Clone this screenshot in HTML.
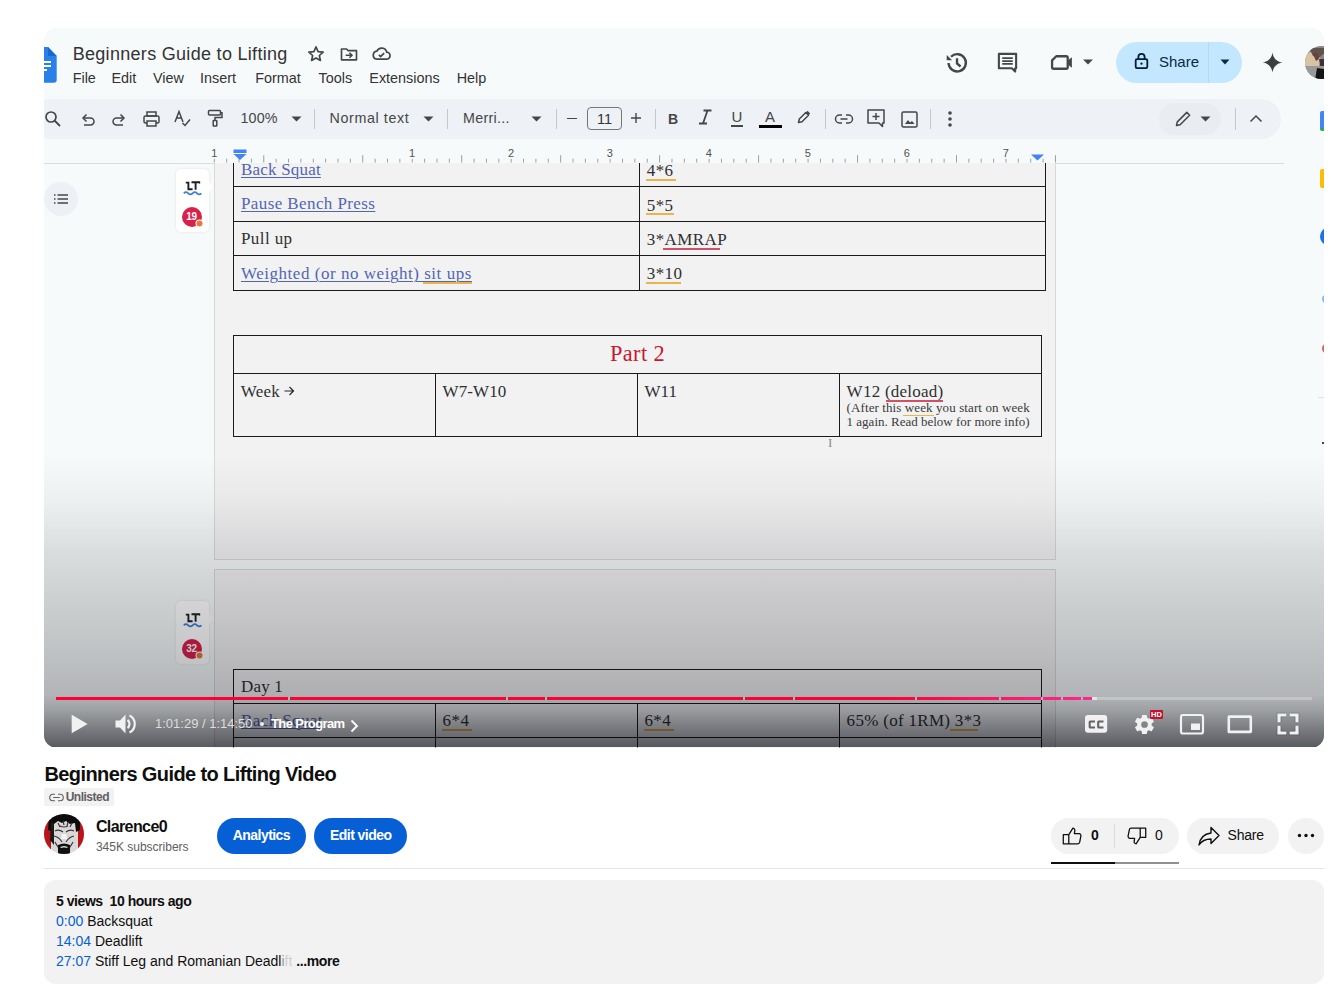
<!DOCTYPE html>
<html><head><meta charset="utf-8">
<style>
*{margin:0;padding:0;box-sizing:border-box}
html,body{width:1341px;height:996px;background:#fff;overflow:hidden;font-family:"Liberation Sans",sans-serif}
.a{position:absolute}
#video{position:absolute;left:0;top:0;width:1341px;height:996px;clip-path:inset(28px 17px 248.5px 44px round 12px);background:#f7fafa}
svg.i{position:absolute;overflow:visible}
.t{position:absolute;white-space:nowrap;line-height:1}
.s{font-family:"Liberation Serif",serif}
.dv{position:absolute;width:1px;background:#c7c7c7}
</style></head><body>
<div id="video">
  <!-- DOCS HEADER -->
  <!-- docs logo -->
  <svg class="i" style="left:40px;top:47px" width="18" height="36" viewBox="0 0 18 36">
    <path d="M0 0 H8 L16.7 9 V33 Q16.7 35.8 13.7 35.8 H0 Z" fill="#2b7fe8"/>
    <path d="M8 0 V9 H16.7 Z" fill="#1967d2"/>
    <rect x="0" y="14" width="11" height="2" fill="#fff"/>
    <rect x="0" y="18" width="11" height="2" fill="#fff"/>
    <rect x="0" y="22" width="7" height="2" fill="#fff"/>
  </svg>
  <div class="t" style="left:72.7px;top:45.4px;font-size:18px;letter-spacing:0.3px;color:#333">Beginners Guide to Lifting</div>
  <div class="t" style="left:72.7px;top:70.5px;font-size:14.4px;color:#333">File</div>
  <div class="t" style="left:111.5px;top:70.5px;font-size:14.4px;color:#333">Edit</div>
  <div class="t" style="left:153px;top:70.5px;font-size:14.4px;color:#333">View</div>
  <div class="t" style="left:200px;top:70.5px;font-size:14.4px;color:#333">Insert</div>
  <div class="t" style="left:255.2px;top:70.5px;font-size:14.4px;color:#333">Format</div>
  <div class="t" style="left:318.5px;top:70.5px;font-size:14.4px;color:#333">Tools</div>
  <div class="t" style="left:369.3px;top:70.5px;font-size:14.4px;color:#333">Extensions</div>
  <div class="t" style="left:456.7px;top:70.5px;font-size:14.4px;color:#333">Help</div>
  <!-- star, folder, cloud -->
  <svg class="i" style="left:306px;top:44px" width="20" height="20" viewBox="0 0 24 24"><path d="M12 3.5l2.5 5.6 6.1.6-4.6 4.1 1.3 6-5.3-3.1-5.3 3.1 1.3-6-4.6-4.1 6.1-.6z" fill="none" stroke="#444746" stroke-width="2" stroke-linejoin="round"/></svg>
  <svg class="i" style="left:339px;top:44px" width="20" height="20" viewBox="0 0 24 24"><path d="M3 6h6l2 2h10v11H3z" fill="none" stroke="#444746" stroke-width="2" stroke-linejoin="round"/><path d="M8 13.5h7M12.5 10.5l3 3-3 3" fill="none" stroke="#444746" stroke-width="2"/></svg>
  <svg class="i" style="left:371px;top:43px" width="21" height="21" viewBox="0 0 24 24"><path d="M6.5 18.5h11a4 4 0 0 0 .5-8 6 6 0 0 0-11.3-1.3A4.7 4.7 0 0 0 6.5 18.5z" fill="none" stroke="#444746" stroke-width="2"/><path d="M9 13.5l2 2 4-4" fill="none" stroke="#444746" stroke-width="2"/></svg>
  <!-- right header icons -->
  <svg class="i" style="left:943.5px;top:49.5px" width="26" height="26" viewBox="0 0 24 24"><path d="M4.2 12A8 8 0 1 0 6.5 6.2" fill="none" stroke="#444746" stroke-width="2.2"/><path d="M2.5 4.5v5h5z" fill="#444746"/><path d="M12 7.5v5l3.3 2.7" fill="none" stroke="#444746" stroke-width="2.2"/></svg>
  <svg class="i" style="left:996px;top:51px" width="23" height="23" viewBox="0 0 24 24"><path d="M3 3h18v15h-1v3.5L16.5 18H3z" fill="none" stroke="#444746" stroke-width="2.2" stroke-linejoin="round"/><path d="M6.5 7.5h11M6.5 10.5h11M6.5 13.5h11" stroke="#444746" stroke-width="1.8"/></svg>
  <svg class="i" style="left:1050px;top:49.5px" width="25" height="25" viewBox="0 0 24 24"><path d="M6 6h9.5a1.5 1.5 0 0 1 1.5 1.5V16.5a1.5 1.5 0 0 1-1.5 1.5H3.5A1.5 1.5 0 0 1 2 16.5V10z" fill="none" stroke="#444746" stroke-width="2.2" stroke-linejoin="round"/><path d="M17 10l4-3v10l-4-3z" fill="#444746"/></svg>
  <svg class="i" style="left:1082px;top:58px" width="12" height="8" viewBox="0 0 12 8"><path d="M1 1.5h10L6 6.5z" fill="#444746"/></svg>
  <div class="a" style="left:1116px;top:42px;width:126px;height:41px;border-radius:20.5px;background:#c2e7ff"></div>
  <div class="a" style="left:1208px;top:42px;width:1px;height:41px;background:#b0daf7"></div>
  <svg class="i" style="left:1132.5px;top:52px" width="17" height="18" viewBox="0 0 19 20"><rect x="3" y="8" width="13" height="10" rx="1.5" fill="none" stroke="#001d35" stroke-width="2"/><path d="M6 8V5.5a3.5 3.5 0 0 1 7 0V8" fill="none" stroke="#001d35" stroke-width="2"/><circle cx="9.5" cy="13" r="1.3" fill="#001d35"/></svg>
  <div class="t" style="left:1159px;top:54px;font-size:15px;color:#0b2a44">Share</div>
  <svg class="i" style="left:1220px;top:59px" width="10" height="6" viewBox="0 0 10 6"><path d="M0.5 0.5h9L5 5.5z" fill="#0b2a44"/></svg>
  <svg class="i" style="left:1260.5px;top:50.5px" width="23" height="23" viewBox="0 0 24 24"><path d="M12 1.5C12.8 7.5 16.5 11.2 22.5 12C16.5 12.8 12.8 16.5 12 22.5C11.2 16.5 7.5 12.8 1.5 12C7.5 11.2 11.2 7.5 12 1.5z" fill="#3c3f3e"/></svg>
  <svg class="i" style="left:1304.5px;top:45.5px" width="34" height="34" viewBox="0 0 34 34"><defs><clipPath id="hav"><circle cx="16.5" cy="16.5" r="16.5"/></clipPath></defs><g clip-path="url(#hav)"><rect width="34" height="34" fill="#8c8580"/><path d="M0 10Q5 4 12 6L16 14 14 20H0z" fill="#d8c3a4"/><path d="M4 2h30v14l-6-2-4-6-6 0-4 4-6-2z" fill="#5d544f"/><path d="M8 8q2-3 5 0l1 5-3 2z" fill="#6b4236"/><path d="M14 13l6 0 3 10-7 2z" fill="#3a3040"/><path d="M0 20h34v14H0z" fill="#9a9a9a"/><path d="M12 22l8 1 6 11H10z" fill="#151515"/><path d="M24 23l4 0 2 6-4 1z" fill="#d0d0d0"/></g></svg>

  <!-- TOOLBAR -->
  <div class="a" style="left:30px;top:99px;width:1251px;height:40px;border-radius:20px;background:#eef1f6"></div>
  <svg class="i" style="left:44px;top:110px" width="18" height="18" viewBox="0 0 18 18"><circle cx="7" cy="7" r="5" fill="none" stroke="#444746" stroke-width="1.7"/><path d="M10.5 10.5l5.5 5.5" stroke="#444746" stroke-width="1.8"/></svg>
  <svg class="i" style="left:79px;top:110px" width="18" height="18" viewBox="0 0 18 18"><path d="M5 8h6.5a3.5 3.5 0 0 1 0 7H5" fill="none" stroke="#444746" stroke-width="1.5"/><path d="M7.5 4.5L4 8l3.5 3.5" fill="none" stroke="#444746" stroke-width="1.5"/></svg>
  <svg class="i" style="left:110px;top:110px" width="18" height="18" viewBox="0 0 18 18"><path d="M13 8H6.5a3.5 3.5 0 0 0 0 7H13" fill="none" stroke="#444746" stroke-width="1.5"/><path d="M10.5 4.5L14 8l-3.5 3.5" fill="none" stroke="#444746" stroke-width="1.5"/></svg>
  <svg class="i" style="left:142px;top:110px" width="19" height="18" viewBox="0 0 19 18"><rect x="5" y="2" width="9" height="4" fill="none" stroke="#444746" stroke-width="1.5"/><rect x="2" y="6" width="15" height="7" rx="1.5" fill="none" stroke="#444746" stroke-width="1.5"/><rect x="5" y="11" width="9" height="5" fill="#eef1f6" stroke="#444746" stroke-width="1.5"/></svg>
  <svg class="i" style="left:173px;top:109px" width="19" height="19" viewBox="0 0 19 19"><path d="M2 13L6 2.5 10 13M3.5 9h5" fill="none" stroke="#444746" stroke-width="1.5"/><path d="M9.5 14l2.5 2.5 5-6" fill="none" stroke="#444746" stroke-width="1.5"/></svg>
  <svg class="i" style="left:206px;top:108px" width="18" height="21" viewBox="0 0 18 21"><rect x="2.5" y="2.5" width="12" height="4.5" rx="1" fill="none" stroke="#444746" stroke-width="1.5"/><path d="M14.5 4.7h1.5v4.8H9v3" fill="none" stroke="#444746" stroke-width="1.5"/><rect x="7.2" y="12.5" width="3.6" height="5.5" rx="0.6" fill="none" stroke="#444746" stroke-width="1.5"/></svg>
  <div class="t" style="left:240.4px;top:111.3px;font-size:14.3px;letter-spacing:0.2px;color:#444746">100%</div>
  <svg class="i" style="left:291px;top:116px" width="11" height="6" viewBox="0 0 11 6"><path d="M0.5 0.5h10L5.5 5.5z" fill="#444746"/></svg>
  <div class="dv" style="left:314px;top:109px;height:20px"></div>
  <div class="t" style="left:329.6px;top:111.3px;font-size:14.3px;letter-spacing:0.6px;color:#444746">Normal text</div>
  <svg class="i" style="left:423px;top:116px" width="11" height="6" viewBox="0 0 11 6"><path d="M0.5 0.5h10L5.5 5.5z" fill="#444746"/></svg>
  <div class="dv" style="left:447px;top:109px;height:20px"></div>
  <div class="t" style="left:463px;top:111.3px;font-size:14.3px;letter-spacing:0.3px;color:#444746">Merri...</div>
  <svg class="i" style="left:531px;top:116px" width="11" height="6" viewBox="0 0 11 6"><path d="M0.5 0.5h10L5.5 5.5z" fill="#444746"/></svg>
  <div class="dv" style="left:556px;top:109px;height:20px"></div>
  <div class="a" style="left:566.5px;top:118px;width:10px;height:1.4px;background:#444746"></div>
  <div class="a" style="left:587px;top:107px;width:35px;height:23px;border:1px solid #747775;border-radius:4px"></div>
  <div class="t" style="left:587px;width:35px;text-align:center;top:111.5px;font-size:14.5px;color:#333">11</div>
  <svg class="i" style="left:630px;top:112px" width="12" height="12" viewBox="0 0 12 12"><path d="M6 1v10M1 6h10" stroke="#444746" stroke-width="1.4"/></svg>
  <div class="dv" style="left:655px;top:109px;height:20px"></div>
  <div class="t" style="left:668px;top:111.5px;font-size:14px;font-weight:bold;color:#444746">B</div>
  <svg class="i" style="left:697px;top:108px" width="16" height="18" viewBox="0 0 16 18"><path d="M6.5 2.5h8M2 15.5h8M10.5 2.5l-4.5 13" fill="none" stroke="#444746" stroke-width="1.8"/></svg>
  <div class="t" style="left:731.5px;top:108.5px;font-size:15px;color:#444746">U</div><div class="a" style="left:731px;top:125px;width:12px;height:1.6px;background:#444746"></div>
  <div class="t" style="left:765px;top:108.5px;font-size:15px;color:#444746">A</div>
  <div class="a" style="left:759.4px;top:124.5px;width:23px;height:3.5px;background:#000"></div>
  <svg class="i" style="left:795px;top:108px" width="18" height="18" viewBox="0 0 18 18"><path d="M3.5 14.5l.8-3.5 6.5-6.5 2.7 2.7-6.5 6.5z" fill="none" stroke="#444746" stroke-width="1.5" stroke-linejoin="round"/><path d="M10.8 4.5l1.7-1.7 2.7 2.7-1.7 1.7z" fill="#444746"/></svg>
  <div class="dv" style="left:825px;top:109px;height:20px"></div>
  <svg class="i" style="left:834px;top:110px" width="20" height="18" viewBox="0 0 20 18"><path d="M8 5H5.5a4 4 0 0 0 0 8H8M12 5h2.5a4 4 0 0 1 0 8H12M6.5 9h7" fill="none" stroke="#444746" stroke-width="1.5"/></svg>
  <svg class="i" style="left:866px;top:108px" width="20" height="21" viewBox="0 0 20 21"><path d="M2 2h16v13h-1.5v3.5L13 15H2z" fill="none" stroke="#444746" stroke-width="1.5" stroke-linejoin="round"/><path d="M10 5v7M6.5 8.5h7" stroke="#444746" stroke-width="1.5"/></svg>
  <svg class="i" style="left:900px;top:110px" width="19" height="19" viewBox="0 0 19 19"><rect x="2" y="2" width="15" height="15" rx="1.5" fill="none" stroke="#444746" stroke-width="1.5"/><path d="M5 14l3-4 2 2.5 2-1.5 2.5 3z" fill="#444746"/></svg>
  <div class="dv" style="left:930px;top:109px;height:20px"></div>
  <svg class="i" style="left:947px;top:110px" width="6" height="18" viewBox="0 0 6 18"><circle cx="3" cy="3" r="1.8" fill="#444746"/><circle cx="3" cy="9" r="1.8" fill="#444746"/><circle cx="3" cy="15" r="1.8" fill="#444746"/></svg>
  <div class="a" style="left:1159px;top:103px;width:62px;height:32px;border-radius:16px;background:#e9ecf1"></div>
  <svg class="i" style="left:1174px;top:110px" width="18" height="18" viewBox="0 0 18 18"><path d="M2.5 15.5l.8-3.6 9.5-9.5 2.8 2.8-9.5 9.5z" fill="none" stroke="#444746" stroke-width="1.5" stroke-linejoin="round"/></svg>
  <svg class="i" style="left:1200px;top:116px" width="11" height="6" viewBox="0 0 11 6"><path d="M0.5 0.5h10L5.5 5.5z" fill="#444746"/></svg>
  <div class="dv" style="left:1235px;top:108px;height:22px"></div>
  <svg class="i" style="left:1249px;top:114px" width="14" height="9" viewBox="0 0 14 9"><path d="M1.5 7.5L7 2l5.5 5.5" fill="none" stroke="#444746" stroke-width="1.5"/></svg>

  <!-- RIGHT SIDE APPS -->
  <div class="a" style="left:1320px;top:111px;width:8px;height:20px;border-radius:2px;background:#4285f4;border-bottom:3px solid #34a853"></div>
  <div class="a" style="left:1320px;top:169px;width:8px;height:19px;border-radius:2px;background:#fbbc04"></div>
  <div class="a" style="left:1320px;top:228px;width:16px;height:17px;border-radius:50%;background:#1a73e8"></div>
  <div class="a" style="left:1322px;top:295px;width:8px;height:8px;border-radius:50%;background:#8ab4f8"></div>
  <div class="a" style="left:1322px;top:344px;width:8px;height:9px;border-radius:50%;background:#c5221f;opacity:.7"></div>
  <div class="a" style="left:1318px;top:397px;width:10px;height:1px;background:#e3e3e3"></div>
  <div class="a" style="left:1322px;top:442px;width:3px;height:2px;background:#444"></div>

  <!-- RULER -->
  <div class="a" style="left:44px;top:162.5px;width:1240px;height:1px;background:#dadce0"></div>
<svg class="i" style="left:0;top:0" width="1341" height="170"><line x1="214.30" y1="158.8" x2="214.30" y2="162.5" stroke="#9c9fa3" stroke-width="1"/><line x1="226.67" y1="158.8" x2="226.67" y2="162.5" stroke="#9c9fa3" stroke-width="1"/><line x1="239.04" y1="158.8" x2="239.04" y2="162.5" stroke="#9c9fa3" stroke-width="1"/><line x1="251.41" y1="158.8" x2="251.41" y2="162.5" stroke="#9c9fa3" stroke-width="1"/><line x1="263.78" y1="155.2" x2="263.78" y2="162.5" stroke="#9c9fa3" stroke-width="1"/><line x1="276.15" y1="158.8" x2="276.15" y2="162.5" stroke="#9c9fa3" stroke-width="1"/><line x1="288.52" y1="158.8" x2="288.52" y2="162.5" stroke="#9c9fa3" stroke-width="1"/><line x1="300.89" y1="158.8" x2="300.89" y2="162.5" stroke="#9c9fa3" stroke-width="1"/><line x1="313.26" y1="158.8" x2="313.26" y2="162.5" stroke="#9c9fa3" stroke-width="1"/><line x1="325.63" y1="158.8" x2="325.63" y2="162.5" stroke="#9c9fa3" stroke-width="1"/><line x1="338.00" y1="158.8" x2="338.00" y2="162.5" stroke="#9c9fa3" stroke-width="1"/><line x1="350.37" y1="158.8" x2="350.37" y2="162.5" stroke="#9c9fa3" stroke-width="1"/><line x1="362.74" y1="155.2" x2="362.74" y2="162.5" stroke="#9c9fa3" stroke-width="1"/><line x1="375.11" y1="158.8" x2="375.11" y2="162.5" stroke="#9c9fa3" stroke-width="1"/><line x1="387.48" y1="158.8" x2="387.48" y2="162.5" stroke="#9c9fa3" stroke-width="1"/><line x1="399.85" y1="158.8" x2="399.85" y2="162.5" stroke="#9c9fa3" stroke-width="1"/><line x1="412.22" y1="158.8" x2="412.22" y2="162.5" stroke="#9c9fa3" stroke-width="1"/><line x1="424.59" y1="158.8" x2="424.59" y2="162.5" stroke="#9c9fa3" stroke-width="1"/><line x1="436.96" y1="158.8" x2="436.96" y2="162.5" stroke="#9c9fa3" stroke-width="1"/><line x1="449.33" y1="158.8" x2="449.33" y2="162.5" stroke="#9c9fa3" stroke-width="1"/><line x1="461.70" y1="155.2" x2="461.70" y2="162.5" stroke="#9c9fa3" stroke-width="1"/><line x1="474.07" y1="158.8" x2="474.07" y2="162.5" stroke="#9c9fa3" stroke-width="1"/><line x1="486.44" y1="158.8" x2="486.44" y2="162.5" stroke="#9c9fa3" stroke-width="1"/><line x1="498.81" y1="158.8" x2="498.81" y2="162.5" stroke="#9c9fa3" stroke-width="1"/><line x1="511.18" y1="158.8" x2="511.18" y2="162.5" stroke="#9c9fa3" stroke-width="1"/><line x1="523.55" y1="158.8" x2="523.55" y2="162.5" stroke="#9c9fa3" stroke-width="1"/><line x1="535.92" y1="158.8" x2="535.92" y2="162.5" stroke="#9c9fa3" stroke-width="1"/><line x1="548.29" y1="158.8" x2="548.29" y2="162.5" stroke="#9c9fa3" stroke-width="1"/><line x1="560.66" y1="155.2" x2="560.66" y2="162.5" stroke="#9c9fa3" stroke-width="1"/><line x1="573.03" y1="158.8" x2="573.03" y2="162.5" stroke="#9c9fa3" stroke-width="1"/><line x1="585.40" y1="158.8" x2="585.40" y2="162.5" stroke="#9c9fa3" stroke-width="1"/><line x1="597.77" y1="158.8" x2="597.77" y2="162.5" stroke="#9c9fa3" stroke-width="1"/><line x1="610.14" y1="158.8" x2="610.14" y2="162.5" stroke="#9c9fa3" stroke-width="1"/><line x1="622.51" y1="158.8" x2="622.51" y2="162.5" stroke="#9c9fa3" stroke-width="1"/><line x1="634.88" y1="158.8" x2="634.88" y2="162.5" stroke="#9c9fa3" stroke-width="1"/><line x1="647.25" y1="158.8" x2="647.25" y2="162.5" stroke="#9c9fa3" stroke-width="1"/><line x1="659.62" y1="155.2" x2="659.62" y2="162.5" stroke="#9c9fa3" stroke-width="1"/><line x1="671.99" y1="158.8" x2="671.99" y2="162.5" stroke="#9c9fa3" stroke-width="1"/><line x1="684.36" y1="158.8" x2="684.36" y2="162.5" stroke="#9c9fa3" stroke-width="1"/><line x1="696.73" y1="158.8" x2="696.73" y2="162.5" stroke="#9c9fa3" stroke-width="1"/><line x1="709.10" y1="158.8" x2="709.10" y2="162.5" stroke="#9c9fa3" stroke-width="1"/><line x1="721.47" y1="158.8" x2="721.47" y2="162.5" stroke="#9c9fa3" stroke-width="1"/><line x1="733.84" y1="158.8" x2="733.84" y2="162.5" stroke="#9c9fa3" stroke-width="1"/><line x1="746.21" y1="158.8" x2="746.21" y2="162.5" stroke="#9c9fa3" stroke-width="1"/><line x1="758.58" y1="155.2" x2="758.58" y2="162.5" stroke="#9c9fa3" stroke-width="1"/><line x1="770.95" y1="158.8" x2="770.95" y2="162.5" stroke="#9c9fa3" stroke-width="1"/><line x1="783.32" y1="158.8" x2="783.32" y2="162.5" stroke="#9c9fa3" stroke-width="1"/><line x1="795.69" y1="158.8" x2="795.69" y2="162.5" stroke="#9c9fa3" stroke-width="1"/><line x1="808.06" y1="158.8" x2="808.06" y2="162.5" stroke="#9c9fa3" stroke-width="1"/><line x1="820.43" y1="158.8" x2="820.43" y2="162.5" stroke="#9c9fa3" stroke-width="1"/><line x1="832.80" y1="158.8" x2="832.80" y2="162.5" stroke="#9c9fa3" stroke-width="1"/><line x1="845.17" y1="158.8" x2="845.17" y2="162.5" stroke="#9c9fa3" stroke-width="1"/><line x1="857.54" y1="155.2" x2="857.54" y2="162.5" stroke="#9c9fa3" stroke-width="1"/><line x1="869.91" y1="158.8" x2="869.91" y2="162.5" stroke="#9c9fa3" stroke-width="1"/><line x1="882.28" y1="158.8" x2="882.28" y2="162.5" stroke="#9c9fa3" stroke-width="1"/><line x1="894.65" y1="158.8" x2="894.65" y2="162.5" stroke="#9c9fa3" stroke-width="1"/><line x1="907.02" y1="158.8" x2="907.02" y2="162.5" stroke="#9c9fa3" stroke-width="1"/><line x1="919.39" y1="158.8" x2="919.39" y2="162.5" stroke="#9c9fa3" stroke-width="1"/><line x1="931.76" y1="158.8" x2="931.76" y2="162.5" stroke="#9c9fa3" stroke-width="1"/><line x1="944.13" y1="158.8" x2="944.13" y2="162.5" stroke="#9c9fa3" stroke-width="1"/><line x1="956.50" y1="155.2" x2="956.50" y2="162.5" stroke="#9c9fa3" stroke-width="1"/><line x1="968.87" y1="158.8" x2="968.87" y2="162.5" stroke="#9c9fa3" stroke-width="1"/><line x1="981.24" y1="158.8" x2="981.24" y2="162.5" stroke="#9c9fa3" stroke-width="1"/><line x1="993.61" y1="158.8" x2="993.61" y2="162.5" stroke="#9c9fa3" stroke-width="1"/><line x1="1005.98" y1="158.8" x2="1005.98" y2="162.5" stroke="#9c9fa3" stroke-width="1"/><line x1="1018.35" y1="158.8" x2="1018.35" y2="162.5" stroke="#9c9fa3" stroke-width="1"/><line x1="1030.72" y1="158.8" x2="1030.72" y2="162.5" stroke="#9c9fa3" stroke-width="1"/><line x1="1043.09" y1="158.8" x2="1043.09" y2="162.5" stroke="#9c9fa3" stroke-width="1"/><line x1="1055.46" y1="155.2" x2="1055.46" y2="162.5" stroke="#9c9fa3" stroke-width="1"/></svg>
<div class="t" style="left:204.3px;width:20px;text-align:center;top:147.6px;font-size:11px;color:#505352">1</div>
<div class="t" style="left:402.0px;width:20px;text-align:center;top:147.6px;font-size:11px;color:#505352">1</div>
<div class="t" style="left:501.0px;width:20px;text-align:center;top:147.6px;font-size:11px;color:#505352">2</div>
<div class="t" style="left:599.9px;width:20px;text-align:center;top:147.6px;font-size:11px;color:#505352">3</div>
<div class="t" style="left:698.8px;width:20px;text-align:center;top:147.6px;font-size:11px;color:#505352">4</div>
<div class="t" style="left:797.8px;width:20px;text-align:center;top:147.6px;font-size:11px;color:#505352">5</div>
<div class="t" style="left:896.7px;width:20px;text-align:center;top:147.6px;font-size:11px;color:#505352">6</div>
<div class="t" style="left:995.7px;width:20px;text-align:center;top:147.6px;font-size:11px;color:#505352">7</div>
<svg class="i" style="left:233px;top:149px" width="14" height="12" viewBox="0 0 14 12"><rect x="0.5" y="0.5" width="13" height="3.5" fill="#4285f4"/><path d="M0.5 5h13L7 11z" fill="#4285f4"/></svg>
<svg class="i" style="left:1031px;top:154px" width="13" height="7" viewBox="0 0 13 7"><path d="M0 0.5h13L6.5 6.5z" fill="#4285f4"/></svg>

  <!-- PAGES -->
  <div class="a" style="left:214px;top:163px;width:842px;height:396.5px;background:#f2f2f3;border:1px solid #d8d8d8;border-top:none"></div>
<div class="a" style="left:214px;top:569px;width:842px;height:200px;background:#f2f2f3;border:1px solid #d8d8d8"></div>
<div class="a" style="left:233.4px;top:186px;width:813px;height:1.2px;background:#1b1b1b"></div>
<div class="a" style="left:233.4px;top:220.7px;width:813px;height:1.2px;background:#1b1b1b"></div>
<div class="a" style="left:233.4px;top:255.2px;width:813px;height:1.2px;background:#1b1b1b"></div>
<div class="a" style="left:233.4px;top:289.6px;width:813px;height:1.2px;background:#1b1b1b"></div>
<div class="a" style="left:233px;top:163px;width:1.2px;height:128px;background:#1b1b1b"></div>
<div class="a" style="left:639px;top:163px;width:1.2px;height:128px;background:#1b1b1b"></div>
<div class="a" style="left:1045px;top:163px;width:1.2px;height:128px;background:#1b1b1b"></div>
<div class="t s" style="left:241px;top:160.8px;font-size:17px;letter-spacing:0.2px;color:#5266b3;text-decoration:underline;text-decoration-color:#5266b3;text-decoration-thickness:1px;text-underline-offset:2px">Back Squat</div>
<div class="t s" style="left:241px;top:195.3px;font-size:17px;letter-spacing:0.4px;color:#5266b3;text-decoration:underline;text-decoration-color:#5266b3;text-decoration-thickness:1px;text-underline-offset:2px">Pause Bench Press</div>
<div class="t s" style="left:241px;top:229.8px;font-size:17px;letter-spacing:0.4px;color:#303030;">Pull up</div>
<div class="t s" style="left:241px;top:265.0px;font-size:17px;letter-spacing:0.53px;color:#5266b3;text-decoration:underline;text-decoration-color:#5266b3;text-decoration-thickness:1px;text-underline-offset:2px">Weighted (or no weight) sit ups</div>
<div class="t s" style="left:646.8px;top:162.0px;font-size:17px;letter-spacing:0.4px;color:#303030;">4*6</div>
<div class="a" style="left:646px;top:178.5px;width:30px;height:2px;background:#e9b44c"></div>
<div class="t s" style="left:646.8px;top:196.8px;font-size:17px;letter-spacing:0.4px;color:#303030;">5*5</div>
<div class="a" style="left:646px;top:212.5px;width:28px;height:2px;background:#e9b44c"></div>
<div class="t s" style="left:646.8px;top:231.3px;font-size:17px;letter-spacing:0.4px;color:#303030;">3*AMRAP</div>
<div class="a" style="left:663px;top:247.5px;width:57px;height:2px;background:#d0506a"></div>
<div class="t s" style="left:646.8px;top:265.3px;font-size:17px;letter-spacing:0.4px;color:#303030;">3*10</div>
<div class="a" style="left:646px;top:281.5px;width:35px;height:2px;background:#e9b44c"></div>
<div class="a" style="left:423px;top:281.5px;width:49px;height:2px;background:#e9b44c"></div>
<div class="a" style="left:233.4px;top:335px;width:808.5px;height:1.2px;background:#1b1b1b"></div>
<div class="a" style="left:233.4px;top:373.3px;width:808.5px;height:1.2px;background:#1b1b1b"></div>
<div class="a" style="left:233.4px;top:435.8px;width:808.5px;height:1.2px;background:#1b1b1b"></div>
<div class="a" style="left:233px;top:335px;width:1.2px;height:102px;background:#1b1b1b"></div>
<div class="a" style="left:1041px;top:335px;width:1.2px;height:102px;background:#1b1b1b"></div>
<div class="a" style="left:435px;top:373.3px;width:1.2px;height:63.5px;background:#1b1b1b"></div>
<div class="a" style="left:637px;top:373.3px;width:1.2px;height:63.5px;background:#1b1b1b"></div>
<div class="a" style="left:839px;top:373.3px;width:1.2px;height:63.5px;background:#1b1b1b"></div>
<div class="t s" style="left:610px;top:343.2px;font-size:22.4px;letter-spacing:0.35px;color:#c8182f;">Part 2</div>
<div class="t s" style="left:240.8px;top:383.0px;font-size:17px;letter-spacing:0.2px;color:#303030;">Week</div>
<svg class="i" style="left:284px;top:386px" width="11" height="10" viewBox="0 0 11 10"><path d="M0.5 5h9M5.5 1l4 4-4 4" fill="none" stroke="#262626" stroke-width="1.2"/></svg>
<div class="t s" style="left:442.6px;top:383.0px;font-size:17px;letter-spacing:0.1px;color:#303030;">W7-W10</div>
<div class="t s" style="left:644.4px;top:383.0px;font-size:17px;letter-spacing:0.1px;color:#303030;">W11</div>
<div class="t s" style="left:846.6px;top:382.8px;font-size:17px;letter-spacing:0.25px;color:#303030;">W12 (deload)</div>
<div class="a" style="left:886px;top:400px;width:57px;height:1.5px;background:#d0506a"></div>
<div class="t s" style="left:846.6px;top:401.4px;font-size:13px;letter-spacing:0.1px;color:#3a3a3a;">(After this week you start on week</div>
<div class="a" style="left:903px;top:414.5px;width:31px;height:1.5px;background:#e9b44c"></div>
<div class="t s" style="left:846.6px;top:415.4px;font-size:13px;letter-spacing:0px;color:#3a3a3a;">1 again. Read below for more info)</div>
<div class="t s" style="left:828px;top:436px;font-size:13px;color:#8a8a8a">I</div>
<div class="a" style="left:233.4px;top:668.5px;width:808.5px;height:1.2px;background:#1b1b1b"></div>
<div class="a" style="left:233.4px;top:703px;width:808.5px;height:1.2px;background:#1b1b1b"></div>
<div class="a" style="left:233.4px;top:737.3px;width:808.5px;height:1.2px;background:#1b1b1b"></div>
<div class="a" style="left:233px;top:668.5px;width:1.2px;height:90px;background:#1b1b1b"></div>
<div class="a" style="left:1041px;top:668.5px;width:1.2px;height:90px;background:#1b1b1b"></div>
<div class="a" style="left:435px;top:703px;width:1.2px;height:50px;background:#1b1b1b"></div>
<div class="a" style="left:637px;top:703px;width:1.2px;height:50px;background:#1b1b1b"></div>
<div class="a" style="left:839px;top:703px;width:1.2px;height:50px;background:#1b1b1b"></div>
<div class="t s" style="left:241px;top:677.6px;font-size:17px;letter-spacing:0.2px;color:#303030;">Day 1</div>
<div class="t s" style="left:241px;top:711.8px;font-size:17px;letter-spacing:0.4px;color:#5266b3;text-decoration:underline;text-decoration-color:#5266b3;text-decoration-thickness:1px;text-underline-offset:2px">Back Squat</div>
<div class="t s" style="left:442.6px;top:712.3px;font-size:17px;letter-spacing:0.4px;color:#303030;">6*4</div>
<div class="a" style="left:442px;top:728.5px;width:30px;height:2px;background:#e9b44c"></div>
<div class="t s" style="left:644.4px;top:712.3px;font-size:17px;letter-spacing:0.4px;color:#303030;">6*4</div>
<div class="a" style="left:644px;top:728.5px;width:30px;height:2px;background:#e9b44c"></div>
<div class="t s" style="left:846.6px;top:712.3px;font-size:17px;letter-spacing:0.3px;color:#303030;">65% (of 1RM) 3*3</div>
<div class="a" style="left:950px;top:728.5px;width:28px;height:2px;background:#e9b44c"></div>
<div class="a" style="left:176px;top:169px;width:33px;height:63px;border-radius:5px;background:#fff;box-shadow:0 0 3px rgba(0,0,0,.10)"></div>
<svg class="i" style="left:209px;top:182px" width="5" height="10" viewBox="0 0 5 10"><path d="M0 0l4.5 5L0 10z" fill="#fff" opacity=".85"/></svg>
<svg class="i" style="left:176px;top:169px" width="33" height="63" viewBox="0 0 33 63"><path d="M9.8 13.6h2.6v6.6h4.2" fill="none" stroke="#1f1f1f" stroke-width="1.9"/><path d="M15.5 13.2h8.2M19.6 13.2v7.6" fill="none" stroke="#1f1f1f" stroke-width="1.9"/><path d="M23.5 12.4v2.2" stroke="#1f1f1f" stroke-width="1.4"/><path d="M7.8 24.3q2.2-2.2 4.4 0t4.4 0 4.4 0 4.4 0" fill="none" stroke="#3d7fd6" stroke-width="1.7"/><circle cx="16" cy="48" r="10" fill="#d9204b"/><circle cx="23.5" cy="54.5" r="4" fill="#fff"/><circle cx="23.5" cy="54.5" r="3" fill="#e8793a"/></svg>
<div class="t" style="left:181.5px;width:20px;text-align:center;top:212px;font-size:10px;font-weight:bold;letter-spacing:-0.3px;color:#fff">19</div>
<div class="a" style="left:176px;top:601px;width:33px;height:63px;border-radius:5px;background:#fff;box-shadow:0 0 3px rgba(0,0,0,.10)"></div>
<svg class="i" style="left:209px;top:614px" width="5" height="10" viewBox="0 0 5 10"><path d="M0 0l4.5 5L0 10z" fill="#fff" opacity=".85"/></svg>
<svg class="i" style="left:176px;top:601px" width="33" height="63" viewBox="0 0 33 63"><path d="M9.8 13.6h2.6v6.6h4.2" fill="none" stroke="#1f1f1f" stroke-width="1.9"/><path d="M15.5 13.2h8.2M19.6 13.2v7.6" fill="none" stroke="#1f1f1f" stroke-width="1.9"/><path d="M23.5 12.4v2.2" stroke="#1f1f1f" stroke-width="1.4"/><path d="M7.8 24.3q2.2-2.2 4.4 0t4.4 0 4.4 0 4.4 0" fill="none" stroke="#3d7fd6" stroke-width="1.7"/><circle cx="16" cy="48" r="10" fill="#d9204b"/><circle cx="23.5" cy="54.5" r="4" fill="#fff"/><circle cx="23.5" cy="54.5" r="3" fill="#e8793a"/></svg>
<div class="t" style="left:181.5px;width:20px;text-align:center;top:644px;font-size:10px;font-weight:bold;letter-spacing:-0.3px;color:#fff">32</div>
<div class="a" style="left:44px;top:182px;width:34px;height:34px;border-radius:50%;background:#edf0f4"></div>
<svg class="i" style="left:53px;top:193px" width="16" height="12" viewBox="0 0 16 12"><path d="M1 2h1.5M1 6h1.5M1 10h1.5M4.5 2H15M4.5 6H15M4.5 10H15" stroke="#444746" stroke-width="1.6"/></svg>

  <!-- OVERLAY -->
  <div class="a" style="left:44px;top:455px;width:1280px;height:292px;background:linear-gradient(to bottom,rgba(0,2,10,0) 0%,rgba(0,2,10,.04) 15.4%,rgba(0,2,10,.115) 32.5%,rgba(0,2,10,.16) 46.2%,rgba(0,2,10,.21) 63.4%,rgba(0,2,10,.28) 82.2%,rgba(0,2,10,.36) 87.3%,rgba(0,2,10,.5) 93.5%,rgba(0,2,10,.64) 100%)"></div>
<div class="a" style="left:56px;top:697px;width:1256px;height:3px;background:rgba(255,255,255,.25)"></div>
<div class="a" style="left:1091.6px;top:697px;width:5px;height:3px;background:rgba(255,255,255,.55)"></div>
<div class="a" style="left:56px;top:697px;width:1035.6px;height:3px;background:linear-gradient(to right,#f03 80%,#ff2791 100%)"></div>
<div class="a" style="left:288.0px;top:697px;width:2px;height:3px;background:#b4b6b8"></div>
<div class="a" style="left:506.1px;top:697px;width:2px;height:3px;background:#b4b6b8"></div>
<div class="a" style="left:544.8px;top:697px;width:2px;height:3px;background:#b4b6b8"></div>
<div class="a" style="left:742.9px;top:697px;width:2px;height:3px;background:#b4b6b8"></div>
<div class="a" style="left:792.8px;top:697px;width:2px;height:3px;background:#b4b6b8"></div>
<div class="a" style="left:914.7px;top:697px;width:2px;height:3px;background:#b4b6b8"></div>
<div class="a" style="left:998.6px;top:697px;width:2px;height:3px;background:#b4b6b8"></div>
<div class="a" style="left:1040.9px;top:697px;width:2px;height:3px;background:#b4b6b8"></div>
<div class="a" style="left:1061.0px;top:697px;width:2px;height:3px;background:#b4b6b8"></div>
<div class="a" style="left:1081.0px;top:697px;width:2px;height:3px;background:#b4b6b8"></div>
<svg class="i" style="left:71px;top:714px" width="18" height="20" viewBox="0 0 18 20"><path d="M0.7 0.8L16.6 10 0.7 19.3z" fill="#f1f1f1"/></svg>
<svg class="i" style="left:115px;top:714px" width="20" height="20" viewBox="0 0 20 20"><path d="M0.5 6.5h4.5L10.5 0.5v19L5 13.5H0.5z" fill="#f1f1f1"/><path d="M12.5 6a5 5 0 0 1 0 8" fill="none" stroke="#f1f1f1" stroke-width="2.2"/><path d="M14.5 1.5a9.5 9.5 0 0 1 0 17" fill="none" stroke="#f1f1f1" stroke-width="2.2"/></svg>
<div class="t" style="left:155px;top:717px;font-size:13px;color:#ddd">1:01:29 / 1:14:50</div>
<div class="a" style="left:259.6px;top:722.4px;width:4px;height:4px;border-radius:50%;background:#eee"></div>
<div class="t" style="left:271px;top:717px;font-size:13px;font-weight:bold;letter-spacing:-0.6px;color:#fff">The Program</div>
<svg class="i" style="left:350px;top:719px" width="9" height="14" viewBox="0 0 9 14"><path d="M1.5 1.5L7 7l-5.5 5.5" fill="none" stroke="#fff" stroke-width="1.8"/></svg>
<svg class="i" style="left:1085px;top:714.5px" width="23" height="18" viewBox="0 0 23 18"><rect x="0" y="0" width="22.2" height="17.8" rx="3" fill="#f1f1f1"/><path d="M10 6.5H5.2q-.5 0-.5.5v5q0 .5.5.5H10M18.5 6.5h-4.8q-.5 0-.5.5v5q0 .5.5.5h4.8" fill="none" stroke="#646464" stroke-width="2.1"/></svg>
<svg class="i" style="left:1132.5px;top:712.6px" width="23" height="23" viewBox="0 0 24 24"><path d="M19.4 13c.04-.33.06-.66.06-1s-.02-.67-.06-1l2.1-1.65c.2-.15.25-.42.12-.64l-2-3.46c-.12-.22-.38-.3-.6-.22l-2.5 1c-.52-.4-1.08-.73-1.7-.98L14.4 2.4c-.04-.24-.25-.4-.5-.4h-4c-.25 0-.46.16-.5.4L9.04 5.05c-.6.25-1.17.58-1.7.98l-2.5-1c-.22-.08-.48 0-.6.22l-2 3.46c-.13.22-.08.5.12.64L4.46 11c-.04.33-.06.66-.06 1s.02.67.06 1l-2.1 1.65c-.2.15-.25.42-.12.64l2 3.46c.12.22.38.3.6.22l2.5-1c.52.4 1.08.73 1.7.98l.4 2.65c.03.24.24.4.49.4h4c.25 0 .46-.16.5-.4l.4-2.65c.6-.25 1.17-.58 1.7-.98l2.5 1c.22.08.48 0 .6-.22l2-3.46c.12-.22.07-.5-.12-.64L19.4 13zM12 15.5A3.5 3.5 0 1 1 12 8.5a3.5 3.5 0 0 1 0 7z" fill="#f1f1f1"/></svg>
<div class="a" style="left:1150px;top:710px;width:13px;height:9px;border-radius:1px;background:#c4112f"></div>
<div class="t" style="left:1150px;width:13px;text-align:center;top:711px;font-size:7.5px;font-weight:bold;color:#fff">HD</div>
<svg class="i" style="left:1180px;top:713.5px" width="25" height="21" viewBox="0 0 25 21"><rect x="1" y="1" width="22" height="18.5" rx="2" fill="none" stroke="#f1f1f1" stroke-width="2.2"/><rect x="11" y="9.5" width="9" height="6.5" fill="#f1f1f1"/></svg>
<svg class="i" style="left:1227px;top:714.5px" width="26" height="19" viewBox="0 0 26 19"><rect x="1.8" y="1.6" width="22" height="15.3" rx="0.4" fill="none" stroke="#f1f1f1" stroke-width="2.6"/></svg>
<svg class="i" style="left:1277px;top:713px" width="22" height="22" viewBox="0 0 22 22"><path d="M2 9.3V2h7.3M12.7 2H20v7.3M20 12.7V20h-7.3M9.3 20H2v-7.3" fill="none" stroke="rgba(0,0,0,.25)" stroke-width="4.6"/><path d="M2 9.3V2h7.3M12.7 2H20v7.3M20 12.7V20h-7.3M9.3 20H2v-7.3" fill="none" stroke="#f1f1f1" stroke-width="3.2"/></svg>
</div>
<!-- BELOW VIDEO -->
<div class="t" style="left:44.5px;top:763.8px;font-size:20px;font-weight:bold;letter-spacing:-0.6px;color:#0f0f0f">Beginners Guide to Lifting Video</div>
<div class="a" style="left:44px;top:788px;width:70px;height:17.5px;border-radius:2px;background:#f2f2f2"></div>
<svg class="i" style="left:48.5px;top:792.5px" width="15" height="9" viewBox="0 0 15 9"><path d="M6 1.2H4a3.3 3.3 0 0 0 0 6.6h2M9 1.2h2a3.3 3.3 0 0 1 0 6.6H9M4.2 4.5h6.6" fill="none" stroke="#606060" stroke-width="1.1"/></svg>
<div class="t" style="left:65.7px;top:791.4px;font-size:12px;font-weight:bold;letter-spacing:-0.5px;color:#606060">Unlisted</div>
<svg class="i" style="left:44px;top:814px" width="40" height="40" viewBox="0 0 40 40"><defs><clipPath id="av"><circle cx="20" cy="20" r="20"/></clipPath></defs><g clip-path="url(#av)"><rect width="40" height="40" fill="#dcd8d8"/><rect x="0" y="6" width="7" height="30" fill="#b8141a"/><rect x="34" y="8" width="6" height="26" fill="#b8141a"/><path d="M5 0h31v16l-4 2-1-9-5 1-4-3-4 2-4-2-4 3-3 7-3-1z" fill="#0b0b0b"/><path d="M7 8l3 1v22l-4-5z" fill="#1a1a1a"/><path d="M14 9l2 4M19 7l1 4M24 8l-1 4M28 9l-2 4M11 17q4-2 8 1M22 18q4-3 8-1M10 22q5 1 8 6M30 22q-5 1-8 6M11 28q2 4 4 6M29 28q-2 4-4 6M16 12q4 2 8 0" stroke="#3a3a3a" stroke-width="1.2" fill="none"/><path d="M18 20h4l1 5h-6z" fill="#f4f4f4"/><path d="M14 31q6-3 12 0v9H14z" fill="#111"/><path d="M16.5 33.5q3.5-1.5 7 0" stroke="#cfcfcf" stroke-width="1.3" fill="none"/></g></svg>
<div class="t" style="left:95.9px;top:819.3px;font-size:16px;font-weight:bold;letter-spacing:-0.6px;color:#0f0f0f">Clarence0</div>
<div class="t" style="left:95.9px;top:840.8px;font-size:12px;color:#606060">345K subscribers</div>
<div class="a" style="left:217px;top:818px;width:89px;height:36px;border-radius:18px;background:#065fd4"></div>
<div class="t" style="left:232.8px;top:828.2px;font-size:14px;font-weight:bold;letter-spacing:-0.55px;color:#fff">Analytics</div>
<div class="a" style="left:314px;top:818px;width:93px;height:36px;border-radius:18px;background:#065fd4"></div>
<div class="t" style="left:330px;top:828.2px;font-size:14px;font-weight:bold;letter-spacing:-0.55px;color:#fff">Edit video</div>
<div class="a" style="left:1051px;top:818px;width:127.5px;height:36px;border-radius:18px;background:#f2f2f2"></div>
<div class="a" style="left:1114px;top:824px;width:1px;height:24px;background:#d9d9d9"></div>
<svg class="i" style="left:1061px;top:825px" width="22" height="22" viewBox="0 0 24 24"><path d="M8.5 10.5L13 3.5c1.2 0 2.2 1 2.1 2.3L14.6 9.5h5.2c1.2 0 2.1 1.1 1.9 2.3l-1.3 7c-.2.9-1 1.7-2 1.7H8.5zM2.5 10.5h6v10h-6z" fill="none" stroke="#0f0f0f" stroke-width="1.4" stroke-linejoin="round"/></svg>
<div class="t" style="left:1091px;top:828px;font-size:14px;font-weight:bold;color:#0f0f0f">0</div>
<svg class="i" style="left:1126px;top:825px" width="22" height="22" viewBox="0 0 24 24"><path d="M15.5 13.5L11 20.5c-1.2 0-2.2-1-2.1-2.3l.5-3.7H4.2c-1.2 0-2.1-1.1-1.9-2.3l1.3-7c.2-.9 1-1.7 2-1.7h9.9zM21.5 13.5h-6v-10h6z" fill="none" stroke="#0f0f0f" stroke-width="1.4" stroke-linejoin="round"/></svg>
<div class="t" style="left:1155px;top:828px;font-size:14px;color:#0f0f0f">0</div>
<div class="a" style="left:1051px;top:862px;width:63.5px;height:2px;background:#0f0f0f"></div>
<div class="a" style="left:1114.5px;top:862px;width:64px;height:2px;background:#909090"></div>
<div class="a" style="left:1186.5px;top:818px;width:92.5px;height:36px;border-radius:18px;background:#f2f2f2"></div>
<svg class="i" style="left:1197px;top:825px" width="24" height="22" viewBox="0 0 24 22"><path d="M14 2.5l8 8-8 8v-4.5C8 14 4.5 16 2 20c.8-6 4.5-11 12-12z" fill="none" stroke="#0f0f0f" stroke-width="1.4" stroke-linejoin="round"/></svg>
<div class="t" style="left:1227.5px;top:828px;font-size:14px;letter-spacing:-0.2px;color:#0f0f0f">Share</div>
<div class="a" style="left:1288px;top:818px;width:36px;height:36px;border-radius:50%;background:#f2f2f2"></div>
<svg class="i" style="left:1297px;top:833px" width="18" height="5" viewBox="0 0 18 5"><circle cx="2.5" cy="2.5" r="1.7" fill="#0f0f0f"/><circle cx="9" cy="2.5" r="1.7" fill="#0f0f0f"/><circle cx="15.5" cy="2.5" r="1.7" fill="#0f0f0f"/></svg>
<div class="a" style="left:44px;top:867.5px;width:1280px;height:1px;background:#e5e5e5"></div>
<div class="a" style="left:44px;top:880px;width:1280px;height:104px;border-radius:12px;background:#f2f2f2"></div>
<div class="t" style="left:56px;top:894px;font-size:14px;font-weight:bold;letter-spacing:-0.45px;color:#0f0f0f;white-space:pre">5 views  10 hours ago</div>
<div class="t" style="left:56px;top:913.6px;font-size:14px;color:#0f0f0f"><span style="color:#065fd4">0:00</span> Backsquat</div>
<div class="t" style="left:56px;top:933.7px;font-size:14px;color:#0f0f0f"><span style="color:#065fd4">14:04</span> Deadlift</div>
<div class="t" style="left:56px;top:953.5px;font-size:14px;color:#0f0f0f"><span style="color:#065fd4">27:07</span> Stiff Leg and Romanian Deadl<span style="color:#9a9a9a">i</span><span style="color:#cfcfcf">ft</span> <b style="letter-spacing:-0.4px">...more</b></div>
</body></html>
